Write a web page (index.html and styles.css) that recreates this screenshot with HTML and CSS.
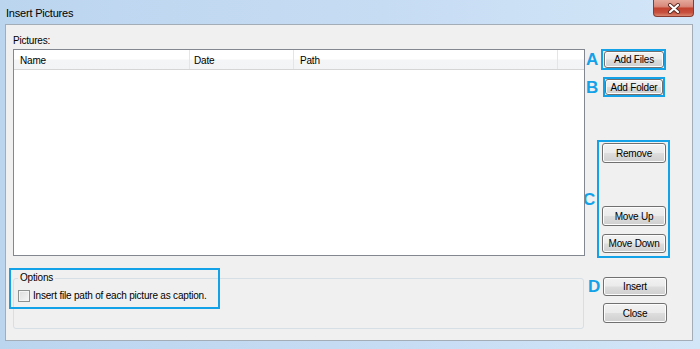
FILE: index.html
```html
<!DOCTYPE html>
<html lang="en">
<head>
    <meta charset="UTF-8">
    <meta name="viewport" content="width=device-width, initial-scale=1.0">
    <title>Insert Pictures</title>
    <link rel="stylesheet" href="styles.css">
</head>
<body>
    <div class="window">
        <div class="titlebar">
            <span class="title">Insert Pictures</span>
            <div class="close">
                <svg width="14" height="11" viewBox="0 0 14 11">
                    <path d="M3 2 L11 9 M11 2 L3 9" stroke="#5a2a22" stroke-width="4" stroke-linecap="round"/>
                    <path d="M3 2 L11 9 M11 2 L3 9" stroke="#fff" stroke-width="2.2" stroke-linecap="round"/>
                </svg>
            </div>
        </div>

        <div class="client">
            <div class="main">
                <div class="label">Pictures:</div>
                <div class="list">
                    <div class="list-head">
                        <div class="col col-name">Name</div>
                        <div class="col col-date">Date</div>
                        <div class="col col-path">Path</div>
                        <div class="col col-rest"></div>
                    </div>
                </div>
                <fieldset class="options">
                    <legend>Options</legend>
                    <label class="check">
                        <span class="checkbox"></span>
                        Insert file path of each picture as caption.
                    </label>
                </fieldset>
                <!-- annotation box over the options group -->
                <div class="mark mark-options"></div>
            </div>

            <div class="side">
                <div class="row row-a">
                    <span class="letter">A</span>
                    <div class="mark-box">
                        <button class="btn">Add Files</button>
                    </div>
                </div>
                <div class="row row-b">
                    <span class="letter">B</span>
                    <div class="mark-box">
                        <button class="btn">Add Folder</button>
                    </div>
                </div>
                <div class="row row-c">
                    <span class="letter">C</span>
                    <div class="mark-box">
                        <button class="btn btn-remove">Remove</button>
                        <button class="btn btn-up">Move Up</button>
                        <button class="btn btn-down">Move Down</button>
                    </div>
                </div>
                <div class="row row-d">
                    <span class="letter">D</span>
                    <button class="btn">Insert</button>
                </div>
                <button class="btn btn-close">Close</button>
            </div>
        </div>
    </div>
</body>
</html>
```

FILE: styles.css
```css
*{
    padding: 0;
    margin: 0;
    box-sizing: border-box;
}

body{
    width: 700px;
    height: 349px;
    overflow: hidden;
    font-family: "Liberation Sans", Arial, sans-serif;
    font-size: 10px;
    letter-spacing: -0.2px;
    color: #000;
}

.window {
    width: 700px;
    height: 349px;
    padding: 0 7px 8px 5px;
    background: linear-gradient(to right, #bcd5ef, #c6dcf3 55%, #d3e6f8);
}

.titlebar {
    height: 24px;
    display: flex;
    justify-content: space-between;
    align-items: flex-start;
}
.title {
    padding: 6px 0 0 1px;
    font-size: 11px;
    line-height: 14px;
}
.close {
    width: 41px;
    height: 17px;
    margin-right: -1px;
    border: 1px solid #8a3a2e;
    border-top: none;
    border-radius: 0 0 4px 4px;
    background: linear-gradient(#e4a99b 0%, #d9897b 40%, #c2432f 52%, #c6503d 78%, #d9856f 100%);
    display: flex;
    justify-content: center;
    align-items: center;
}

.client {
    height: 317px;
    border: 1px solid #a3adb8;
    background-color: #f0f0f0;
    display: flex;
}

.main {
    position: relative;
    width: 572px;
    margin-left: 7px;
}
.label {
    margin-top: 10px;
    line-height: 12px;
}
.list {
    margin-top: 2px;
    height: 207px;
    border: 1px solid #828790;
    background-color: #fff;
}
.list-head {
    display: flex;
    height: 20px;
    border-bottom: 1px solid #d5d5d5;
    background: linear-gradient(#ffffff 0%, #ffffff 45%, #f4f5f7 55%, #f3f4f6 100%);
}
.col {
    padding-top: 2px;
    line-height: 17px;
    border-right: 1px solid #e3e5e8;
}
.col-name {
    width: 176px;
    padding-left: 6px;
}
.col-date {
    width: 104px;
    padding-left: 4px;
}
.col-path {
    width: 264px;
    padding-left: 6px;
}
.col-rest {
    flex: 1;
    border-right: none;
}

.options {
    margin-top: 16px;
    width: 571px;
    height: 57px;
    padding: 0 4px;
    border: 1px solid #d5dfe5;
    border-radius: 3px;
}
.options legend {
    padding: 0 2px;
    line-height: 12px;
}
.check {
    display: flex;
    align-items: center;
    gap: 3px;
    margin-top: 6px;
    line-height: 12px;
}
.checkbox {
    width: 12px;
    height: 12px;
    border: 1px solid #8e8f8f;
    background: linear-gradient(135deg, #dcdcdc, #f6f6f6);
    box-shadow: inset 0 0 0 1px #f4f4f4;
}

.mark {
    position: absolute;
    border: 2px solid #13a1e8;
}
.mark-options {
    left: -4px;
    top: 243px;
    width: 211px;
    height: 41px;
}

.side {
    display: flex;
    flex-direction: column;
}
.row {
    display: flex;
    align-items: center;
}
.letter {
    font-size: 17px;
    font-weight: bold;
    letter-spacing: 0;
    color: #13a1e8;
    line-height: 17px;
}
.mark-box {
    border: 2px solid #13a1e8;
}

.btn {
    display: block;
    font-family: inherit;
    font-size: 10px;
    letter-spacing: -0.2px;
    color: #000;
    border: 1px solid #707070;
    border-radius: 3px;
    background: linear-gradient(#f2f2f2 0%, #ebebeb 48%, #dddddd 52%, #cfcfcf 100%);
    box-shadow: inset 0 0 0 1px #fcfcfc;
}

.row-a {
    margin-top: 24px;
}
.row-a .letter {
    width: 15px;
    margin-left: 1px;
}
.row-a .mark-box {
    width: 65px;
    height: 21px;
    padding-left: 1px;
}
.row-a .btn {
    width: 60px;
    height: 17px;
}

.row-b {
    margin-top: 7px;
}
.row-b .letter {
    width: 17px;
    margin-left: 1px;
}
.row-b .mark-box {
    width: 62px;
    height: 20px;
    padding-left: 0px;
}
.row-b .btn {
    width: 58px;
    height: 16px;
}

.row-c {
    margin-top: 43px;
}
.row-c .letter {
    width: 14px;
    margin-left: -2px;
}
.row-c .mark-box {
    width: 73px;
    height: 118px;
    padding: 1px 0 0 3px;
}
.row-c .btn {
    width: 64px;
}
.btn-remove {
    height: 20px;
}
.btn-up {
    height: 20px;
    margin-top: 43px;
}
.btn-down {
    height: 19px;
    margin-top: 8px;
}

.row-d {
    margin-top: 19px;
}
.row-d .letter {
    width: 15px;
    margin-left: 3px;
}
.row-d .btn {
    width: 64px;
    height: 19px;
}
.btn-close {
    width: 64px;
    height: 20px;
    margin: 7px 0 0 18px;
}
```
